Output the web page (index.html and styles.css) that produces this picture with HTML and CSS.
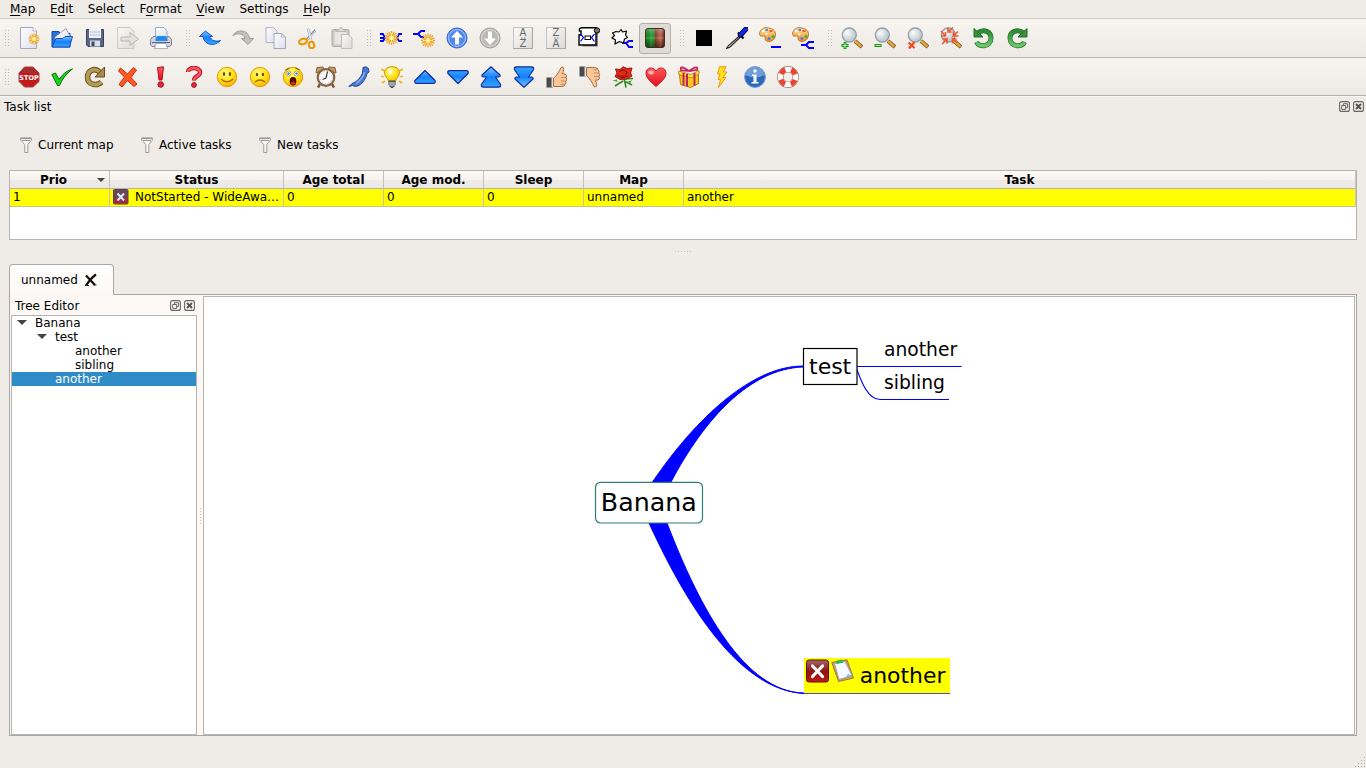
FILE: index.html
```html
<!DOCTYPE html>
<html lang="en">
<head>
<meta charset="utf-8">
<title>Mind map</title>
<link rel="stylesheet" href="styles.css">
</head>
<body>
<svg class="defs" width="0" height="0">
<defs>
<linearGradient id="blue" x1="0" y1="0" x2="0" y2="1"><stop offset="0" stop-color="#7fc4ff"/><stop offset=".5" stop-color="#1681fb"/><stop offset="1" stop-color="#36a4ff"/></linearGradient>
<linearGradient id="paper" x1="0" y1="0" x2="1" y2="1"><stop offset="0" stop-color="#fff"/><stop offset="1" stop-color="#dcdfee"/></linearGradient>
<linearGradient id="grey" x1="0" y1="0" x2="1" y2="1"><stop offset="0" stop-color="#fafafa"/><stop offset="1" stop-color="#dcdad6"/></linearGradient>
<linearGradient id="red" x1="0" y1="0" x2="0" y2="1"><stop offset="0" stop-color="#ff5a5a"/><stop offset="1" stop-color="#e30f1d"/></linearGradient>
<linearGradient id="darkred" x1="0" y1="0" x2="0" y2="1"><stop offset="0" stop-color="#a06a67"/><stop offset=".5" stop-color="#8e1414"/><stop offset="1" stop-color="#c01818"/></linearGradient>
<radialGradient id="smile" cx=".4" cy=".3" r=".75"><stop offset="0" stop-color="#fff98a"/><stop offset=".55" stop-color="#ffe414"/><stop offset="1" stop-color="#f5a800"/></radialGradient>
<radialGradient id="lens" cx=".35" cy=".35" r=".7"><stop offset="0" stop-color="#fbfdfe"/><stop offset="1" stop-color="#b3bfc6"/></radialGradient>
<linearGradient id="split"><stop offset="0" stop-color="#0c8a1c"/><stop offset=".45" stop-color="#2fa03a"/><stop offset=".52" stop-color="#8c3f25"/><stop offset=".8" stop-color="#c07660"/><stop offset="1" stop-color="#7d1a10"/></linearGradient>
<linearGradient id="shade" x1="0" y1="0" x2="0" y2="1"><stop offset="0" stop-color="#fff" stop-opacity=".3"/><stop offset=".5" stop-color="#000" stop-opacity="0"/><stop offset="1" stop-color="#000" stop-opacity=".5"/></linearGradient>
<linearGradient id="orange" x1="0" y1="0" x2="0" y2="1"><stop offset="0" stop-color="#ffe0a0"/><stop offset="1" stop-color="#f09018"/></linearGradient>
<linearGradient id="green" x1="0" y1="0" x2="0" y2="1"><stop offset="0" stop-color="#2c8b32"/><stop offset="1" stop-color="#6cc66c"/></linearGradient>
<g id="star"><path d="M0-7V7M-7 0H7M-5-5L5 5M5-5L-5 5M-2.700-6.300L2.700 6.300M2.700-6.300L-2.700 6.300M-6.300-2.700L6.300 2.700M-6.300 2.700L6.300-2.700" stroke="#eda52a" stroke-width="1.300"/><path d="M0-5V5M-5 0H5M-3.600-3.600L3.600 3.600M3.600-3.600L-3.600 3.600" stroke="#ffe27a" stroke-width="1"/><circle r="2.200" fill="#fff5a8"/></g>
<g id="mag"><path d="M14 14l7 6" stroke="#7a5018" stroke-width="4"/><path d="M14 14l6.500 5.600" stroke="#eba83e" stroke-width="2.400"/><circle cx="8.300" cy="8" r="7" fill="url(#lens)" stroke="#95a0a6" stroke-width="1.300"/></g>
<g id="palette"><path d="M8 .8C3-.2-.8 6 1 8.500c1 1.600 3-.4 4.400.5C7 10 5 12.500 7.500 14c4 1.600 9-1 9-6.500C16.500 3 12.500 1 8 .8z" fill="url(#orange)" stroke="#b87432"/><rect x="3" y="3" width="2.600" height="2.400" fill="#fff"/><rect x="6.500" y="2" width="2.500" height="2" fill="#3a97e8"/><rect x="10.500" y="3" width="3" height="2" fill="#ed5a3c"/><circle cx="14" cy="9.500" r="1.500" fill="#39b33c"/><circle cx="10" cy="11.500" r="1.500" fill="#4a78ea"/><circle cx="7.500" cy="7" r="1.200" fill="#f7eee0"/></g>
<g id="tri"><path d="M11 4.500L21 14.500Q21.800 17.300 19.500 17.300H2.500Q.2 17.300 1 14.500z" fill="url(#blue)" stroke="#0f2f9a" stroke-width="1.200" stroke-linejoin="round"/></g>
<g id="dbl"><path d="M11 .8L20 9Q20.500 11 18.500 11H15.500L20.300 18Q21.500 21.200 18.500 21.200H3.500Q.5 21.200 1.700 18L6.500 11H3.500Q1.500 11 2 9z" fill="url(#blue)" stroke="#0f2f9a" stroke-width="1.200" stroke-linejoin="round"/></g>
<g id="thumb"><path d="M.5 11.500H6.500V21.500H.5z" fill="#4a4a4a"/><path d="M5.500 11.500h2v9.500h-2z" fill="#d9dde2"/><path d="M7.500 12.500C11 9 13 6 15 1.500c3-1.500 3.500 1 1.500 6.500h2.500q2.500 1 1 3.500 1.500 2-.2 3.600 1 1.800-.8 3 0 2.400-3.500 2.400L7.500 20.500z" fill="#fbc798" stroke="#9a6236" stroke-width=".9"/><path d="M15 11.600h5M15 15h4.500M14.500 18.200h4" stroke="#ba7a48" stroke-width=".8"/></g>
<g id="face"><circle cx="11" cy="11" r="9.700" fill="url(#smile)" stroke="#e29c08" stroke-width="1"/></g>
<g id="flag-x"><rect x=".5" y=".5" width="22" height="22" rx="2.500" fill="url(#darkred)" stroke="#5c0d0d"/><path d="M6.500 6.500L16.500 17M16.500 6.500L6.500 17" stroke="#fff" stroke-width="3.200" stroke-linecap="round"/></g>
<g id="funnel"><path d="M.7 1.200H11.300V3.200L7.800 7.500V15.500H4.800V7.500L.7 3.200z" fill="#fbfaf9" stroke="#9a9998"/><path d="M.7 1.200h10.600M2 3.400h8" stroke="#888"/></g>
<g id="float"><rect x=".6" y=".6" width="9.800" height="9.800" rx="2" fill="none" stroke="#666" stroke-width="1.100"/><path d="M4.500 4V2.700H8.500V6.600H7.200M2.700 4.500H6.600V8.400H2.700z" fill="none" stroke="#666"/></g>
<g id="close"><rect x=".6" y=".6" width="9.800" height="9.800" rx="2" fill="none" stroke="#666" stroke-width="1.100"/><path d="M3 3l5 5M8 3L3 8" stroke="#555" stroke-width="2"/></g>
</defs>
</svg>

<nav class="menubar">
<span><u>M</u>ap</span><span>E<u>d</u>it</span><span>Select</span><span>F<u>o</u>rmat</span><span><u>V</u>iew</span><span>Settings</span><span><u>H</u>elp</span>
</nav>

<div class="toolbar main">
<i class="handle first"></i>
<b><svg viewBox="0 0 22 22"><path d="M2.500.5H15L18.500 4V21.500H2.500z" fill="url(#paper)" stroke="#a3a7c1"/><path d="M15 .5V4h3.500" fill="#fff" stroke="#b8bccf"/><use href="#star" transform="translate(16 12) scale(.8)"/></svg></b>
<b><svg viewBox="0 0 22 22"><path d="M1 4.500H8L9 6.500H19V20H1z" fill="#2a70d8" stroke="#1a4aa4"/><path d="M4 10L15 1.500 19 9 17 14H4z" fill="url(#paper)" stroke="#8090b8" stroke-width=".8"/><path d="M1 20L5 11.500H12L14 9.500H21.500L18.500 20z" fill="url(#blue)" stroke="#1450b4"/></svg></b>
<b><svg viewBox="0 0 22 22"><path d="M2.500 2.500H19.500V19.500H4L2.500 18z" fill="#5b6786" stroke="#38415e"/><rect x="5" y="2" width="12" height="9" fill="#edf1f8"/><path d="M6 5h10M6 8h10" stroke="#b9c2d3"/><rect x="6" y="13.500" width="10" height="6" fill="#d9dfe9"/><rect x="7.500" y="14.500" width="3" height="4.500" fill="#414b68"/></svg></b>
<b class="off"><svg viewBox="0 0 22 22"><path d="M.7.5H13L17 4.500V21.500H.7z" fill="url(#grey)" stroke="#c6c4c0"/><path d="M4 10H13V5.500L21.500 12 13 18.500V14H4z" fill="#e2e0dd" stroke="#b2b0ad"/></svg></b>
<b><svg viewBox="0 0 22 22"><path d="M5.500.5H14L17 4V11H5.500z" fill="url(#paper)" stroke="#8cb2dc"/><path d="M3 9.500h3v4h11v-4h2l2.500 3V18l-2 1.500H2.500L.5 18v-5.500z" fill="#d0d2dd" stroke="#7d8096"/><path d="M7 9h9l1.500 5H5.500z" fill="#1a8cf2"/><path d="M2 15.500h18" stroke="#606478"/><path d="M6 16.500h10l1.500 5H4.500z" fill="#fff" stroke="#9aa0b5" stroke-width=".8"/></svg></b>
<i class="handle"></i>
<b><svg viewBox="0 0 22 22"><path d="M6.500 4L.5 9.500H4C5 17 14 21 21.500 13.500 16 15 12.500 13.500 10.500 9.500H13.500z" fill="url(#blue)" stroke="#1855c8" stroke-linejoin="round"/></svg></b>
<b><svg viewBox="0 0 22 22"><path d="M.8 8.500C5 2 16 2 17.500 11.500H21.500L16 17.500 9.500 11.500H13C12 6.500 6 5.500.8 8.500z" fill="#c2c1be" stroke="#9a9996" stroke-linejoin="round"/></svg></b>
<b><svg viewBox="0 0 22 22"><path d="M1 .7H8.500L12 4V15.500H1z" fill="url(#paper)" stroke="#adb0bf"/><path d="M9 6.500H16.500L20.500 10V21.500H9z" fill="url(#paper)" stroke="#a3a6b6"/><path d="M16.500 6.500V10h4" fill="none" stroke="#b4b7c4"/></svg></b>
<b><svg viewBox="0 0 22 22"><path d="M17.500 3L8.500 13" stroke="#8089a0" stroke-width="2.600"/><path d="M10 1.500L13 13" stroke="#abb2c2" stroke-width="2.600"/><path d="M10 1.500L13 13M18 3L9 13" stroke="#f2f4f8" stroke-width="1"/><ellipse cx="5" cy="14.500" rx="4" ry="2.600" transform="rotate(-20 5 14.500)" fill="none" stroke="#e99a0c" stroke-width="2.200"/><ellipse cx="13.500" cy="18" rx="2.600" ry="3.300" transform="rotate(-15 13.500 18)" fill="none" stroke="#e99a0c" stroke-width="2.200"/></svg></b>
<b class="off"><svg viewBox="0 0 22 22"><rect x="1" y="2.500" width="17" height="17" rx="1.500" fill="#c8c5c0" stroke="#a8a6a2"/><rect x="3.500" y="4.500" width="12" height="13" fill="#e7e5e2"/><path d="M5 4.500V3h3L9 .7h2L12 3h3v1.500z" fill="#e0dedb" stroke="#a8a6a2" stroke-width=".8"/><path d="M10.500 7.500H17L21 11V21.500H10.500z" fill="url(#grey)" stroke="#bab8b4"/></svg></b>
<i class="handle"></i>
<b><svg viewBox="0 0 22 22"><path d="M0 7h3l2 4H0M5 11L3 14H0M22 7h-3l-2 4 2 3h3" fill="none" stroke="#00f" stroke-width="1.800"/><use href="#star" x="11.500" y="11"/></svg></b>
<b><svg viewBox="0 0 22 22"><path d="M0 7h5l3-3h4M5 7l3 3h3" fill="none" stroke="#00f" stroke-width="1.800"/><use href="#star" x="15" y="13.500"/></svg></b>
<b><svg viewBox="0 0 22 22"><circle cx="11" cy="11" r="10" fill="#5388ed" stroke="#3266cf"/><circle cx="11" cy="11" r="8.500" fill="none" stroke="#a7c5ff"/><path d="M11 4L17 10.500H13V17.500H9V10.500H5z" fill="#fff"/></svg></b>
<b><svg viewBox="0 0 22 22"><circle cx="11" cy="11" r="10" fill="#bbb9b6" stroke="#a3a19e"/><circle cx="11" cy="11" r="8.500" fill="none" stroke="#dedcd9"/><path d="M11 18L17 11.500H13V4.500H9V11.500H5z" fill="#fff"/></svg></b>
<b><svg viewBox="0 0 22 22"><rect x="1.500" y=".5" width="19" height="21" fill="url(#grey)" stroke="#c5c3bf"/><path d="M20.500.5v21h-19" fill="none" stroke="#a8a6a3"/><text x="11" y="8.800" class="az">A</text><text x="11" y="19.800" class="az">Z</text><path d="M9 11h4.500" stroke="#777" stroke-dasharray="1.500"/></svg></b>
<b><svg viewBox="0 0 22 22"><rect x="1.500" y=".5" width="19" height="21" fill="url(#grey)" stroke="#c5c3bf"/><path d="M20.500.5v21h-19" fill="none" stroke="#a8a6a3"/><text x="11" y="8.800" class="az">Z</text><text x="11" y="19.800" class="az">A</text><path d="M9 11h4.500" stroke="#777" stroke-dasharray="1.500"/></svg></b>
<b><svg viewBox="0 0 22 22"><path d="M4 19.500h16V6h-2z" fill="#888"/><path d="M4 .7H18V18H1V8H3V4H1.500Q.5 1 4 .7z" fill="#fff" stroke="#000" stroke-width="1.400"/><circle cx="19" cy="3.500" r="2.700" fill="#777" stroke="#000"/><rect x="7" y="9" width="5.500" height="3.500" fill="none" stroke="#000"/><path d="M2.500 7l3 3.500-3 4M16.500 7l-3 3.500 3 4" fill="none" stroke="#00f" stroke-width="1.200"/></svg></b>
<b><svg viewBox="0 0 22 22"><path d="M11 16h4l3-2h4M15 16l3 4h4" fill="none" stroke="#00f" stroke-width="2"/><path d="M5 4.500L8 5 10 2.500 11.500 5 15.500 4 14.500 8 16.500 10.500 13.500 12 12.500 16 8.500 14.500 4 17 4.500 13 1 11 3.500 8.500 1.500 6z" fill="#fff" stroke="#000" stroke-width="1.200" stroke-linejoin="round"/></svg></b>
<b class="pressed"><svg viewBox="0 0 22 22"><rect x="1.500" y="1.500" width="19" height="19" rx="2.500" fill="url(#split)"/><rect x="1.500" y="1.500" width="19" height="19" rx="2.500" fill="url(#shade)" stroke="#4a2a1c"/><path d="M7 2v18M2 11h18" stroke="#fff" stroke-opacity=".2"/></svg></b>
<i class="handle"></i>
<b><svg viewBox="0 0 22 22"><rect x="3" y="3" width="16" height="16"/></svg></b>
<b><svg viewBox="0 0 22 22"><path d="M14 8.500L2.500 18.500.5 21.500 4 20 14.500 10" fill="#e8eaee" stroke="#222" stroke-width="1.100"/><path d="M12 5.500l5.500 6" stroke="#000" stroke-width="2.200"/><path d="M14.500 8L20 2" stroke="#0a0a50" stroke-width="5.400" stroke-linecap="round"/><path d="M14.500 7.500L20 2" stroke="#1625e8" stroke-width="3.200" stroke-linecap="round"/></svg></b>
<b><svg viewBox="0 0 22 22"><use href="#palette"/><path d="M12 20h10" stroke="#00f" stroke-width="2"/></svg></b>
<b><svg viewBox="0 0 22 22"><use href="#palette"/><path d="M9 18h5l3-3h5M14 18l3 3h5" fill="none" stroke="#00f" stroke-width="1.800"/></svg></b>
<i class="handle"></i>
<b><svg viewBox="0 0 22 22"><use href="#mag"/><path d="M4 15v7M.5 18.500h7" stroke="#179417" stroke-width="2.800"/><path d="M4 16v5M1.500 18.500h5" stroke="#b5f5a5"/></svg></b>
<b><svg viewBox="0 0 22 22"><use href="#mag"/><path d="M.5 18.500h7" stroke="#179417" stroke-width="3"/><path d="M1.500 18.500h5" stroke="#b5f5a5"/></svg></b>
<b><svg viewBox="0 0 22 22"><use href="#mag"/><path d="M1.500 15.500l6 5.500M7.500 15L2 21.500" stroke="#f44a1c" stroke-width="2.300"/></svg></b>
<b><svg viewBox="0 0 22 22"><use href="#mag"/><g fill="none" stroke="#f0562c" stroke-width="1.600"><path d="M1 9H5.500V5M1 4l4.500 5M8 .5v4.500h3.500M13 .5L8 5M18 4.500l-4.500 4.500h5M13.500 4.500V9M2 17l5-5v4.500M3 12h4M17.500 16L12.500 12v4.500M12.500 12h4"/></g></svg></b>
<b><svg viewBox="0 0 22 22"><path d="M4.500 6C11 1 18 5 18 11c0 9-12 10-14.500 4" fill="none" stroke="#23702a" stroke-width="5"/><path d="M4.500 6C11 1 18 5 18 11c0 9-12 10-14.500 4" fill="none" stroke="url(#green)" stroke-width="3.600"/><path d="M1 1.500V10H10z" fill="#398f40" stroke="#23702a"/></svg></b>
<b><svg viewBox="0 0 22 22"><g transform="matrix(-1 0 0 1 22 0)"><path d="M4.500 6C11 1 18 5 18 11c0 9-12 10-14.500 4" fill="none" stroke="#23702a" stroke-width="5"/><path d="M4.500 6C11 1 18 5 18 11c0 9-12 10-14.500 4" fill="none" stroke="url(#green)" stroke-width="3.600"/><path d="M1 1.500V10H10z" fill="#398f40" stroke="#23702a"/></g></svg></b>
</div>

<div class="toolbar flags">
<i class="handle first"></i>
<b><svg viewBox="0 0 22 22"><path d="M6.500 1h8.500L21 7v8.500L15 21H6.500L1 15.500V7z" fill="#c31a1a" stroke="#a04444"/><path d="M6.500 2h8.500L19.500 7H2.500z" fill="#913c3c" opacity=".6"/><text x="11" y="13.600" class="stop">STOP</text></svg></b>
<b><svg viewBox="0 0 22 22"><path d="M.8 8.500L4.500 7 8 13.500C11 9 15 5 21.500 3 15 8 11 13.500 8.500 19.500H6.500z" fill="#19d219" stroke="#0a730a" stroke-linejoin="round"/></svg></b>
<b><svg viewBox="0 0 22 22"><path d="M16 6.500C10.500.5 3.500 5 3.500 11c0 8 9.500 9.500 14 5" fill="none" stroke="#68501c" stroke-width="5.500"/><path d="M16 6.500C10.500.5 3.500 5 3.500 11c0 8 9.500 9.500 14 5" fill="none" stroke="#b59a55" stroke-width="3.600"/><path d="M20.500 1V11H11z" fill="#a88c48" stroke="#68501c"/></svg></b>
<b><svg viewBox="0 0 22 22"><path d="M3.500 2L10.500 8 16.500 1.500 19.500 4 14 11.500 20 18 17 20.500 10.500 14.500 5 21 2 18.500 7.500 11 1.500 5z" fill="#ff5820" stroke="#c72a0d" stroke-linejoin="round"/></svg></b>
<b><svg viewBox="0 0 22 22"><path d="M7.500 1.500L13.500 .8 12 14H9z" fill="url(#red)" stroke="#b3101b"/><circle cx="10.700" cy="18.500" r="2.800" fill="#e82634" stroke="#9c1722"/></svg></b>
<b><svg viewBox="0 0 22 22"><path d="M5 6C5 .5 17 .5 17 6.500c0 4-6 3.500-6 8" fill="none" stroke="#b91622" stroke-width="4.400"/><path d="M5 6C5 .5 17 .5 17 6.500c0 4-6 3.500-6 8" fill="none" stroke="#fa5864" stroke-width="2.400"/><circle cx="11" cy="19" r="2.400" fill="#e82634" stroke="#9c1722"/></svg></b>
<b><svg viewBox="0 0 22 22"><use href="#face"/><ellipse cx="8" cy="8" rx="1.200" ry="2" fill="#6b4b00"/><ellipse cx="14" cy="8" rx="1.200" ry="2" fill="#6b4b00"/><path d="M5 13q6 5.500 12 0" fill="none" stroke="#b46400" stroke-width="1.500"/></svg></b>
<b><svg viewBox="0 0 22 22"><use href="#face"/><ellipse cx="8" cy="8.500" rx="1.200" ry="1.800" fill="#6b4b00"/><ellipse cx="14" cy="8.500" rx="1.200" ry="1.800" fill="#6b4b00"/><path d="M6 16q5-4 10 0" fill="none" stroke="#b46400" stroke-width="1.500"/></svg></b>
<b><svg viewBox="0 0 22 22"><use href="#face"/><circle cx="6.500" cy="7.500" r="2.500" fill="#fff" stroke="#c19120" stroke-width=".8"/><circle cx="14.500" cy="7.500" r="2.500" fill="#fff" stroke="#c19120" stroke-width=".8"/><circle cx="6.500" cy="7.500" r="1.200" fill="#238be5"/><circle cx="14.500" cy="7.500" r="1.200" fill="#238be5"/><path d="M3.500 4l4-2M17.500 4l-4-2" stroke="#8c5a00" stroke-width="1.200"/><ellipse cx="11" cy="15.200" rx="3.300" ry="4.200" fill="#500808"/><path d="M8.500 17q2.500-3 5 0-2.500 3.500-5 0" fill="#e42a18"/></svg></b>
<b><svg viewBox="0 0 22 22"><path d="M5 18l-2 3.500M17 18l2 3.500" stroke="#745334" stroke-width="2.500"/><path d="M1 7L2 1.500 8 1 9 4zM21 7L20 1.500 14 1 13 4z" fill="#c69a67" stroke="#866039"/><circle cx="11" cy="11.500" r="8.300" fill="#fafafa" stroke="#876543" stroke-width="2.200"/><circle cx="11" cy="11.500" r="6" fill="none" stroke="#aaa" stroke-dasharray="1 2.140"/><path d="M12.500 5.500L11 12l-3.500 1.500" fill="none" stroke="#444" stroke-width="1.200"/></svg></b>
<b><svg viewBox="0 0 22 22"><path d="M15 1.500Q18-.5 20.500 2.500L21 6l-2 1.500Q17.500 15 11 19.500 7 21.500 4.500 19.500L.8 20.500 5 17Q11 15 14.500 7z" fill="#4679d1" stroke="#234a9c"/><path d="M16.500 6Q15 13 8 17.500" stroke="#85aaea" stroke-width="1.500" fill="none"/></svg></b>
<b><svg viewBox="0 0 22 22"><path d="M.5 3l3 2M0 10.500h3M1 17l3-2M21.500 3l-3 2M22 10.500h-3M21 17l-3-2" stroke="#f1b31a" stroke-width="1.600"/><path d="M11 .7C2 .7 2 9 6.500 12.500L8 16h6l1.500-3.500C20 9 20 .7 11 .7z" fill="url(#smile)" stroke="#cb9710"/><path d="M8 15h6v4l-2 2.500H10L8 19z" fill="#70747c" stroke="#383c44"/><path d="M8 17h6M8 19h6" stroke="#d5d8dd"/><ellipse cx="9" cy="5.500" rx="2" ry="3" fill="#fffbd8"/></svg></b>
<b><svg viewBox="0 0 22 22"><use href="#tri"/></svg></b>
<b><svg viewBox="0 0 22 22"><use href="#tri" transform="matrix(1 0 0 -1 0 22)"/></svg></b>
<b><svg viewBox="0 0 22 22"><use href="#dbl"/></svg></b>
<b><svg viewBox="0 0 22 22"><use href="#dbl" transform="matrix(1 0 0 -1 0 22)"/></svg></b>
<b><svg viewBox="0 0 22 22"><use href="#thumb"/></svg></b>
<b><svg viewBox="0 0 22 22"><use href="#thumb" transform="matrix(1 0 0 -1 0 22)"/></svg></b>
<b><svg viewBox="0 0 22 22"><path d="M11 10Q13 15 14 21.500M12 15l8 4M11 15L3 20M13 13l8-.5" stroke="#348a24" stroke-width="1.700" fill="none"/><path d="M5 13.500l-4.500 1 5 1.500zM15 16l5-2-2 4z" fill="#50aa3b"/><path d="M3.500 3L8 3.500 11 .8 15 2.500 20 2 18.500 7 20 10 14.500 13 8 13.500 3 10.500 5 7z" fill="#df2a1c" stroke="#9d180e"/><path d="M7 6q4-4 8 0-1 5-6 4M5 9l5 3 6-2" stroke="#840d0a" fill="none"/></svg></b>
<b><svg viewBox="0 0 22 22"><path d="M11 20.500C7 17 1 12.500 1 7 1 1.500 8 0 11 5c3-5 10-3.500 10 2 0 5.500-6 10-10 13.500z" fill="url(#red)" stroke="#c51b22"/><ellipse cx="6" cy="6.500" rx="2.800" ry="2" fill="#ffb0b0"/></svg></b>
<b><svg viewBox="0 0 22 22"><path d="M1.500 8L13 10.500 20.500 7V17.500L12.500 21.500 2.500 18.500z" fill="#f8c81e" stroke="#b27b09"/><path d="M.7 5L13 8.500 21 4.500V8L13 12 .7 8.500z" fill="#ffdf46" stroke="#b27b09" stroke-width=".8"/><path d="M5.500 7v12.500M9 8v12.500M16.500 7v12.500" stroke="#c6215d" stroke-width="2"/><path d="M11 5Q1-2 3 4.500zM11 5Q21-2 19 4z" fill="#f4adc2" stroke="#c6215d" stroke-width="1.700"/></svg></b>
<b><svg viewBox="0 0 22 22"><path d="M8.500.7H15L12.500 6H16L12 11.500H15L7.500 21.500 9.500 13.500H7L9 8H6.500z" fill="#ffe120" stroke="#ed9a10" stroke-linejoin="round"/></svg></b>
<b><svg viewBox="0 0 22 22"><circle cx="11" cy="11" r="10.400" fill="#2c69ba" stroke="#6f9bd4"/><path d="M1.500 9Q3 1 11 1t9.500 8q-9 5-19 0" fill="#8bb2e4" opacity=".7"/><circle cx="11" cy="5" r="1.800" fill="#fff"/><path d="M8 8.500h4.500v7.500H14.500v1.500H7.500V16H9.500V10H8z" fill="#fff"/></svg></b>
<b><svg viewBox="0 0 22 22"><circle cx="11" cy="11" r="7.700" fill="none" stroke="#9f7770" stroke-width="6.400"/><circle cx="11" cy="11" r="7.700" fill="none" stroke="#fafafa" stroke-width="5.200"/><circle cx="11" cy="11" r="7.700" fill="none" stroke="#e8442e" stroke-width="5.200" stroke-dasharray="6.050 6.050" stroke-dashoffset="-3.020"/></svg></b>
</div>

<header class="dock-title"><span>Task list</span><span class="dock-btns"><svg viewBox="0 0 11 11"><use href="#float"/></svg><svg viewBox="0 0 11 11"><use href="#close"/></svg></span></header>

<div class="filters">
<span class="f1"><svg viewBox="0 0 12 16"><use href="#funnel"/></svg>Current map</span>
<span class="f2"><svg viewBox="0 0 12 16"><use href="#funnel"/></svg>Active tasks</span>
<span class="f3"><svg viewBox="0 0 12 16"><use href="#funnel"/></svg>New tasks</span>
</div>

<section class="tasks">
<div class="row head"><span class="sorted">Prio</span><span>Status</span><span>Age total</span><span>Age mod.</span><span>Sleep</span><span>Map</span><span>Task</span></div>
<div class="row task"><span class="current">1</span><span class="status"><svg viewBox="0 0 16 16"><rect x=".5" y=".5" width="14.500" height="14.500" rx="1" fill="#714653" stroke="#514367"/><path d="M1 9h14v6H1z" fill="#983340"/><path d="M4.500 4.500l6.500 7M11 4.500l-6.500 7" stroke="#d5eeff" stroke-width="2"/></svg>NotStarted - WideAwa…</span><span>0</span><span>0</span><span>0</span><span>unnamed</span><span>another</span></div>
</section>

<div class="split-h"><i></i></div>

<div class="tabs"><div class="tab">unnamed<svg viewBox="0 0 14 14"><path d="M2 2.500L11 12M12 1.500Q7 5 2 12.500" fill="none" stroke="#111" stroke-width="2.200"/><path d="M1 12.500h4M9.500 12h3" stroke="#222"/></svg></div><div class="tab-line"></div></div>

<main class="pane">
<aside class="tree-dock">
<header class="tree-title"><span>Tree Editor</span><span class="dock-btns"><svg viewBox="0 0 11 11"><use href="#float"/></svg><svg viewBox="0 0 11 11"><use href="#close"/></svg></span></header>
<div class="tree">
<div class="l0 open">Banana</div>
<div class="l1 open">test</div>
<div class="l2">another</div>
<div class="l2">sibling</div>
<div class="l1 selected">another</div>
</div>
</aside>
<div class="split-v"><i></i></div>
<div class="canvas">
<svg viewBox="204 297 1150 437">
<path d="M652.500 482C696 418 752 366 803 366V367C750 369 705 418 671 482z" fill="#00f" stroke="#00f"/>
<path d="M649 523C688 608 740 690 804 693.500V693C745 692 700 609 667 523z" fill="#00f" stroke="#00f"/>
<rect x="595.500" y="482.300" width="107" height="40.700" rx="5" fill="#fff" stroke="#2d7f72" stroke-width="1.200"/>
<text x="600.800" y="511" font-size="25.300">Banana</text>
<path d="M856 366.500H961.500M856 367C860 378 867 399.500 880 399.500H949" fill="none" stroke="#00f" stroke-width="1.200"/>
<rect x="803.500" y="348.500" width="53.500" height="36" fill="#fff" stroke="#000" stroke-width="1.200"/>
<text x="809" y="374" font-size="22">test</text>
<text x="884" y="356" font-size="18.700">another</text>
<text x="884" y="389" font-size="18.700">sibling</text>
<rect x="804" y="658" width="146" height="36" fill="#ff0"/>
<path d="M804 693.500H950" stroke="#5353ac" stroke-width="1.200"/>
<use href="#flag-x" x="806" y="659.500"/>
<g transform="translate(831 659)"><path d="M.8 3.500L16 .8 22.500 19 7.500 22.500z" fill="#d89a45" stroke="#ac7335"/><path d="M3.500 4.500L14 2.500 21 16.500 8 20.500z" fill="#f7fbff" stroke="#88add4"/><path d="M14 19l7-2.500-4-1.500z" fill="#72c4e8"/><path d="M4.500 3.500L6 1.500 11 .5 12.500 3.500 6 5z" fill="#2ebc4b"/></g>
<text x="859.800" y="683" font-size="21.900">another</text>
</svg>
</div>
</main>
<footer class="statusbar"><svg viewBox="0 0 12 12"><path d="M10 1.500h1M7 4.500h1M10 4.500h1M4 7.500h1M7 7.500h1M10 7.500h1M1 10.500h1M4 10.500h1M7 10.500h1M10 10.500h1" stroke="#aaa7a3"/></svg></footer>
</body>
</html>
```

FILE: styles.css
```css
* { box-sizing: border-box; }
body { margin: 0; width: 1366px; height: 768px; overflow: hidden; display: flex; flex-direction: column; background: #efebe7; color: #000; font: 12px/14px "DejaVu Sans", sans-serif; }
svg { display: block; flex: none; }
.defs { position: absolute; }
.menubar { height: 19px; flex: none; border-bottom: 1px solid #cdc9c5; display: flex; gap: 14.6px; padding: 2px 0 0 10px; }
.menubar u { text-underline-offset: 2px; text-decoration-skip-ink: none; }
.toolbar { flex: none; display: flex; align-items: center; padding-left: 12px; background: linear-gradient(#f8f5f1, #edeae6); border-bottom: 1px solid #b7b3af; }
.main { height: 39px; }
.flags { height: 38px; }
.toolbar b { width: 33px; height: 31px; display: flex; align-items: center; justify-content: center; flex: none; }
.toolbar b svg { width: 22px; height: 22px; }
.toolbar .pressed { background: #dedad7; border: 1px solid #b3afab; border-radius: 3px; width: 32px; margin-left: 1px; }
.off { opacity: .9; }
.handle { width: 4px; height: 16px; margin: 0 3px 0 9px; flex: none; background: conic-gradient(from 0deg at 1px 1px, transparent 270deg, #c0bcb8 0) 0 0 / 3px 3px; }
.handle.first { margin: 0 3px 0 -7px; }
.az { font: 10px "DejaVu Sans", sans-serif; text-anchor: middle; fill: #666; }
.stop { font: bold 6.500px "DejaVu Sans", sans-serif; text-anchor: middle; fill: #fff; }
.dock-title { height: 22px; flex: none; display: flex; align-items: center; justify-content: space-between; padding: 0 2px 2px 4px; border-top: 1px solid #f8f5f1; }
.dock-btns { display: flex; gap: 3px; }
.dock-btns svg { width: 11px; height: 11px; }
.filters { height: 52px; flex: none; display: flex; align-items: center; padding: 2px 0 0 20px; }
.filters span { display: flex; align-items: center; gap: 6px; }
.filters svg { width: 12px; height: 16px; }
.f1 { width: 121px; }
.f2 { width: 118px; }
.tasks { height: 70px; flex: none; margin: 0 9px; border: 1px solid #b7b3af; background: #fff; }
.row { display: grid; grid-template-columns: 100px 174px 100px 100px 100px 100px 1fr; height: 18px; }
.row span { border-right: 1px solid #c5c1bd; overflow: hidden; white-space: nowrap; }
.head { background: linear-gradient(#fdfaf7, #f4f1ee 50%, #eeebe8 51%, #eae7e4); border-bottom: 1px solid #b7b3af; font-weight: bold; text-align: center; line-height: 18px; }
.head .sorted { position: relative; padding-right: 12px; }
.sorted::after { content: ""; position: absolute; right: 4px; top: 7px; border: 4px solid transparent; border-top: 4px solid #444; border-bottom: 0; }
.task { background: #ff0; border-bottom: 1px solid #c8c678; line-height: 16px; }
.task span { padding-left: 3px; }
.task .status { display: flex; gap: 6px; align-items: center; line-height: 14px; padding-bottom: 1px; }
.status svg { width: 16px; height: 16px; }
.split-h { height: 24px; flex: none; display: flex; justify-content: center; align-items: center; padding-bottom: 2px; }
.split-h i { width: 17px; height: 1px; background: repeating-linear-gradient(90deg, #c2beba 0 1px, transparent 1px 3px); }
.tabs { height: 31px; flex: none; display: flex; padding: 0 9px; }
.tab { width: 105px; border: 1px solid #aaa6a2; border-bottom: 0; border-radius: 4px 4px 0 0; background: linear-gradient(#fff, #fcf8f5); display: flex; align-items: center; gap: 6px; padding-left: 11px; }
.tab svg { width: 14px; height: 14px; }
.tab-line { flex: 1; border-bottom: 1px solid #aaa6a2; }
.pane { height: 441px; flex: none; margin: 0 9px; border: 1px solid #aaa6a2; border-top: 0; background: #fcf8f5; display: flex; padding: 1px 1px 0; }
.tree-dock { width: 186px; display: flex; flex-direction: column; }
.tree-title { height: 19px; display: flex; justify-content: space-between; align-items: center; padding: 0 2px 0 4px; }
.tree { flex: 1; border: 1px solid #b7b3af; background: #fff; }
.tree div { height: 14px; line-height: 14px; position: relative; }
.l0 { padding-left: 23px; }
.l1 { padding-left: 43px; }
.l2 { padding-left: 63px; }
.open::before { content: ""; position: absolute; top: 4px; left: 5px; border: 5px solid transparent; border-top-color: #444; border-bottom: 0; }
.l1.open::before { left: 25px; }
.tree .selected { background: #308cc6; color: #fff; }
.split-v { width: 6px; display: flex; justify-content: center; align-items: center; }
.split-v i { width: 1px; height: 16px; background: repeating-linear-gradient(#c2beba 0 1px, transparent 1px 3px); }
.canvas { flex: 1; border: 1px solid #b7b3af; background: #fff; }
.canvas svg { width: 100%; height: 437px; font-family: "DejaVu Sans", sans-serif; }
.statusbar { flex: 1; display: flex; align-items: flex-end; justify-content: flex-end; }
.statusbar svg { width: 12px; height: 12px; }
```
